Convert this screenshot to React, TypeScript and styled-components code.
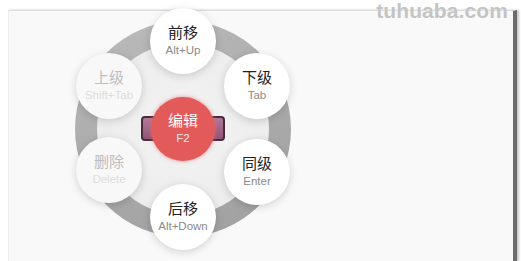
import React from 'react';
import styled, { createGlobalStyle } from 'styled-components';

const GlobalStyle = createGlobalStyle`
  html, body {
    margin: 0;
    padding: 0;
    background: #ffffff;
    font-family: "Liberation Sans", Arial, "Noto Sans CJK SC", sans-serif;
  }
`;

const Page = styled.div`
  position: relative;
  width: 521px;
  height: 261px;
  padding: 10px 4px 0 8px;
  box-sizing: border-box;
  overflow: hidden;
`;

const Watermark = styled.div`
  position: absolute;
  top: 0;
  right: 13px;
  font-size: 21px;
  line-height: 21px;
  font-weight: 700;
  letter-spacing: 0.1px;
  color: #c4c4c4;
  text-shadow: 0 0 1px #fff;
  z-index: 2;
`;

const Panel = styled.div`
  height: 100%;
  box-sizing: border-box;
  background: #f9f9f9;
  border-top: 1px solid #dcdcdc;
  border-left: 1px solid #ededed;
  border-right: 4px solid #6c6c6c;
  box-shadow: 2px 0 2px #c8c8c8;
  padding: 9.5px 0 0 66px;
`;

const Ring = styled.div`
  position: relative;
  width: 216px;
  height: 216px;
  border-radius: 50%;
  background: linear-gradient(160deg, #bcbcbc 0%, #ababab 50%, #9f9f9f 100%);
  display: flex;
  align-items: center;
  justify-content: center;
`;

const Hub = styled.div`
  width: 172px;
  height: 172px;
  border-radius: 50%;
  background: radial-gradient(circle, #f3f3f3 0%, #ededed 70%, #e6e6e6 100%);
  display: flex;
  align-items: center;
  justify-content: center;
  position: relative;
`;

const Wings = styled.div`
  position: absolute;
  width: 80px;
  height: 21px;
  border: 2px solid #4a2a40;
  border-radius: 4px;
  background: linear-gradient(#b27896, #8f5576);
`;

const EditButton = styled.div`
  position: relative;
  width: 64px;
  height: 64px;
  border-radius: 50%;
  background: #e35a5a;
  box-shadow: 0 0 4px rgba(230, 110, 110, 0.7);
  color: #ffffff;
  display: flex;
  flex-direction: column;
  align-items: center;
  justify-content: center;
  gap: 3px;
`;

const Item = styled.div<{ $x: number; $y: number; $disabled?: boolean }>`
  position: absolute;
  left: 50%;
  top: 50%;
  width: 66px;
  height: 66px;
  margin: -33px 0 0 -33px;
  transform: translate(${p => p.$x}px, ${p => p.$y}px);
  border-radius: 50%;
  background: ${p => (p.$disabled ? '#f8f8f8' : '#ffffff')};
  box-shadow: 0 2px 9px rgba(0, 0, 0, 0.16);
  display: flex;
  flex-direction: column;
  align-items: center;
  justify-content: center;
  gap: 3px;
  z-index: 1;
`;

const Label = styled.span<{ $disabled?: boolean; $light?: boolean }>`
  font-size: 15px;
  line-height: 17px;
  color: ${p => (p.$light ? '#ffffff' : p.$disabled ? '#bdbdbd' : '#222222')};
`;

const Key = styled.span<{ $disabled?: boolean; $light?: boolean }>`
  font-size: 11.5px;
  line-height: 13px;
  color: ${p => (p.$light ? '#ffe9e9' : p.$disabled ? '#dddddd' : '#8a8a8a')};
`;

const items = [
  { label: '前移', key: 'Alt+Up', x: 0, y: -88 },
  { label: '下级', key: 'Tab', x: 74, y: -43 },
  { label: '同级', key: 'Enter', x: 74, y: 43 },
  { label: '后移', key: 'Alt+Down', x: 0, y: 88 },
  { label: '删除', key: 'Delete', x: -74, y: 41, disabled: true },
  { label: '上级', key: 'Shift+Tab', x: -74, y: -43, disabled: true },
];

export default function App() {
  return (
    <>
      <GlobalStyle />
      <Page>
        <Watermark>tuhuaba.com</Watermark>
        <Panel>
          <Ring>
            <Hub>
              <Wings />
              <EditButton>
                <Label $light>编辑</Label>
                <Key $light>F2</Key>
              </EditButton>
            </Hub>
            {items.map(it => (
              <Item key={it.label} $x={it.x} $y={it.y} $disabled={it.disabled}>
                <Label $disabled={it.disabled}>{it.label}</Label>
                <Key $disabled={it.disabled}>{it.key}</Key>
              </Item>
            ))}
          </Ring>
        </Panel>
      </Page>
    </>
  );
}
